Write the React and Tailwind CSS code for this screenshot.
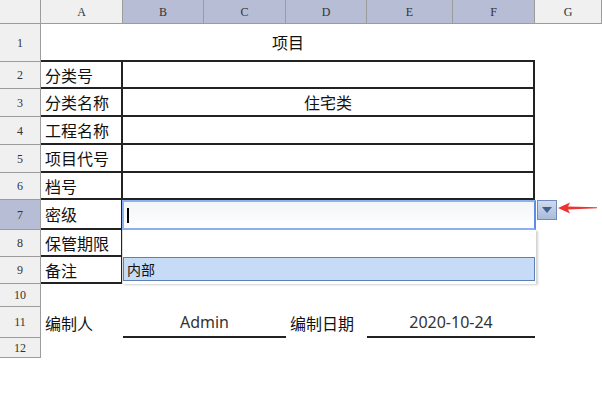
const cols = [
  { key: 'A', w: 82 },
  { key: 'B', w: 81, sel: true },
  { key: 'C', w: 82, sel: true },
  { key: 'D', w: 81, sel: true },
  { key: 'E', w: 86, sel: true },
  { key: 'F', w: 82, sel: true },
  { key: 'G', w: 67 },
];

const formRows = [
  { n: 2, h: 27, label: '分类号' },
  { n: 3, h: 28, label: '分类名称', value: '住宅类' },
  { n: 4, h: 28, label: '工程名称' },
  { n: 5, h: 28, label: '项目代号' },
  { n: 6, h: 27, label: '档号' },
  { n: 7, h: 30, label: '密级', active: true },
  { n: 8, h: 27, label: '保管期限' },
  { n: 9, h: 27, label: '备注' },
];

const cjk = { fontFamily: '"Noto Sans CJK SC", "Noto Sans", sans-serif' };
const serif = { fontFamily: '"Liberation Serif", "DejaVu Serif", serif' };
const latin = { fontFamily: '"Noto Sans", sans-serif' };

function RowHead({ n, active }) {
  return (
    <div
      style={serif}
      className={`w-[41px] shrink-0 flex items-center justify-center border-r border-b border-[#9c9c9c] text-[12px] text-[#333] ${
        active ? 'bg-[#b6bdd5]' : 'bg-[#f0f0f0]'
      }`}
    >
      {n}
    </div>
  );
}

function FormRow({ row }) {
  return (
    <div className="flex" style={{ height: row.h }}>
      <RowHead n={row.n} active={row.active} />
      <div className="flex w-[494px] border-b-2 border-[#222]" style={cjk}>
        <div className="w-[82px] border-r-2 border-[#222] flex items-center pl-[4px] text-[16px] text-[#111]">
          {row.label}
        </div>
        <div className="flex-1 border-r-2 border-[#222] flex items-center justify-center text-[16px] text-[#111]">
          {row.value}
        </div>
      </div>
    </div>
  );
}

function ArrowDown() {
  return (
    <svg width="10" height="6" viewBox="0 0 10 6">
      <path d="M0 0 H10 L5 6 Z" fill="#3f5f90" />
    </svg>
  );
}

function RedArrow() {
  return (
    <svg width="40" height="14" viewBox="0 0 40 14">
      <polygon points="0,7 12,1.5 10,5.6 39,6.2 39,7.2 10,8.6 12,12.5" fill="#ec3434" />
    </svg>
  );
}

export default function App() {
  return (
    <div className="relative w-[602px] h-[393px] bg-white overflow-hidden select-none">
      {/* column headers */}
      <div className="flex h-[24px]" style={serif}>
        <div className="w-[41px] shrink-0 bg-[#f0f0f0] border-r border-b border-[#9c9c9c]" />
        {cols.map((c) => (
          <div
            key={c.key}
            style={{ width: c.w }}
            className={`shrink-0 flex items-center justify-center border-r border-b border-[#9c9c9c] text-[12px] text-[#333] ${
              c.sel ? 'bg-[#b6bdd5]' : 'bg-[#f0f0f0]'
            }`}
          >
            {c.key}
          </div>
        ))}
      </div>

      {/* row 1: title */}
      <div className="flex h-[38px]">
        <RowHead n={1} />
        <div className="w-[494px] border-b-2 border-[#222] flex items-center justify-center text-[16px] text-[#111]" style={cjk}>
          项目
        </div>
      </div>

      {formRows.map((r) => (
        <FormRow key={r.n} row={r} />
      ))}

      {/* row 10 */}
      <div className="flex h-[23px]">
        <RowHead n={10} />
      </div>

      {/* row 11: signature line */}
      <div className="flex h-[31px] text-[16px] text-[#111]">
        <RowHead n={11} />
        <div className="w-[82px] flex items-center pl-[4px]" style={cjk}>编制人</div>
        <div className="w-[163px] border-b-2 border-[#222] flex items-center justify-center text-[16px] text-[#333]" style={latin}>
          Admin
        </div>
        <div className="w-[81px] flex items-center pl-[4px]" style={cjk}>编制日期</div>
        <div className="w-[168px] border-b-2 border-[#222] flex items-center justify-center text-[16px] text-[#333]" style={latin}>
          2020-10-24
        </div>
      </div>

      {/* row 12 */}
      <div className="flex h-[20px]">
        <RowHead n={12} />
      </div>

      {/* cell editor overlay */}
      <div className="absolute left-[122px] top-[200px] w-[414px] h-[30px] border-2 border-[#8cb1f2] border-r-[#5b8ce8] bg-gradient-to-b from-[#f3f5f6] to-white flex items-center pl-[3px]">
        <div className="w-[2px] h-[15px] bg-black" />
      </div>

      {/* dropdown list */}
      <div className="absolute left-[122px] top-[230px] w-[414px] h-[54px] bg-white border-l border-[#dcdcdc] shadow-[2px_1px_2px_rgba(0,0,0,0.18)] flex flex-col">
        <div className="h-[27px]" />
        <div className="mr-[1px] h-[24px] bg-[#c6dcf6] border border-[#5c80b6] flex items-center pl-[3px] text-[14px] text-[#111]" style={cjk}>
          内部
        </div>
      </div>

      {/* dropdown button */}
      <div className="absolute left-[537px] top-[200px] w-[20px] h-[20px] border border-[#6f8cbb] bg-gradient-to-b from-[#cfdaee] to-[#a9bbdb] flex items-center justify-center">
        <ArrowDown />
      </div>

      {/* red pointer */}
      <div className="absolute left-[558px] top-[201px]">
        <RedArrow />
      </div>
    </div>
  );
}
